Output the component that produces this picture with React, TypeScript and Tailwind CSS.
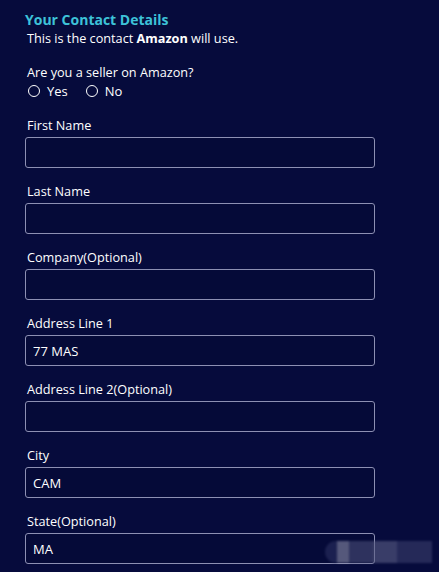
import { useState } from "react";

const fields = [
  { label: "First Name", value: "" },
  { label: "Last Name", value: "" },
  { label: "Company(Optional)", value: "" },
  { label: "Address Line 1", value: "77 MAS" },
  { label: "Address Line 2(Optional)", value: "" },
  { label: "City", value: "CAM" },
  { label: "State(Optional)", value: "MA" },
];

export default function App() {
  const [seller, setSeller] = useState<string>();
  const [values, setValues] = useState(fields.map((f) => f.value));

  return (
    <div
      className="relative h-[572px] w-[439px] overflow-hidden bg-[#060b3c] text-white"
      style={{ fontFamily: '"Open Sans", "Noto Sans", sans-serif' }}
    >
      <div className="pl-[25px] pt-[11px]">
        <h2 className="text-[14px] font-bold leading-[18px] text-[#3dc2d8]">
          Your Contact Details
        </h2>
        <p className="pl-[2px] text-[12.7px] leading-[18px]">
          This is the contact <span className="font-bold">Amazon</span> will use.
        </p>

        <p className="mt-[16px] pl-[2px] text-[12.7px] leading-[18px]">
          Are you a seller on Amazon?
        </p>
        <div className="mt-[1px] flex items-center gap-[18px] pl-[3px] text-[13px] leading-[18px]">
          {["Yes", "No"].map((opt) => (
            <label key={opt} className="flex cursor-pointer items-center gap-[7px]">
              <span
                className="flex h-[12px] w-[12px] items-center justify-center rounded-full border border-white"
                onClick={() => setSeller(opt)}
              >
                {seller === opt && <span className="h-[6px] w-[6px] rounded-full bg-white" />}
              </span>
              {opt}
            </label>
          ))}
        </div>

        <div className="mt-[16px] flex flex-col gap-[14px]">
          {fields.map((f, i) => (
            <div key={f.label} className="flex flex-col">
              <span className="pl-[2px] text-[12.7px] leading-[18px]">{f.label}</span>
              <input
                className="mt-[3px] h-[31px] w-[350px] rounded-[3px] border border-[#8d90b3] bg-[#050a38] px-[7px] text-[13px] text-white outline-none"
                value={values[i]}
                onChange={(e) =>
                  setValues(values.map((v, j) => (j === i ? e.target.value : v)))
                }
              />
            </div>
          ))}
        </div>
      </div>

      <div className="absolute left-[325px] top-[541px] flex h-[22px] w-[107px] overflow-hidden rounded-l-full opacity-60 blur-[1px]">
        <div className="w-[12px] bg-[#2b3060]" />
        <div className="w-[12px] bg-[#8a8ca8]" />
        <div className="w-[24px] bg-[#4a4e78]" />
        <div className="w-[24px] bg-[#5c5f86]" />
        <div className="w-[35px] bg-[#3a3e6c]" />
      </div>
    </div>
  );
}
